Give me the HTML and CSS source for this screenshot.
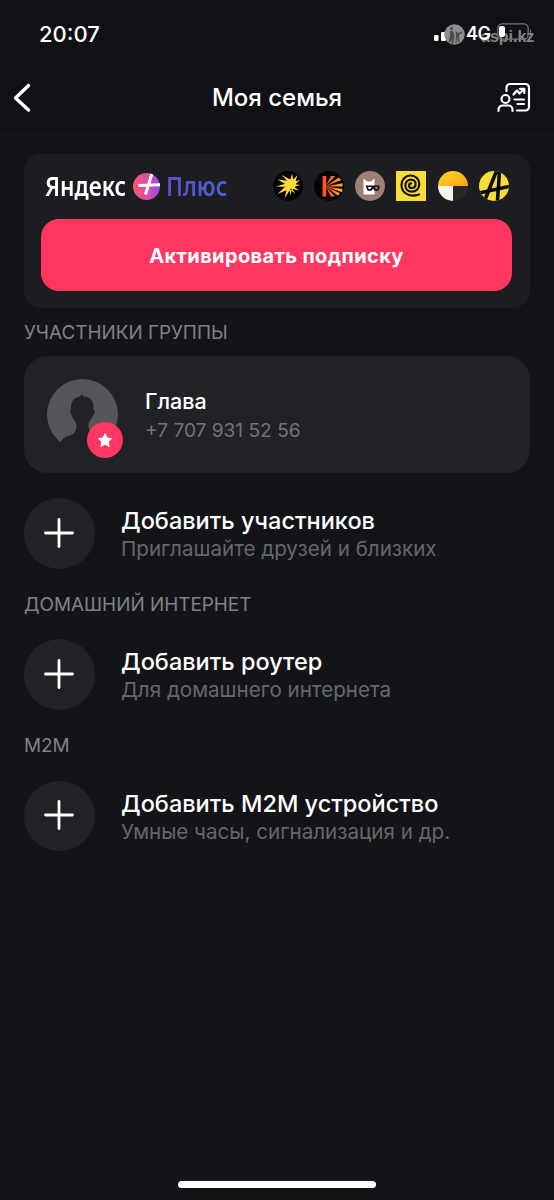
FILE: index.html
```html
<!DOCTYPE html>
<html lang="ru">
<head>
<meta charset="utf-8">
<title>Моя семья</title>
<link rel="stylesheet" href="styles.css">
</head>
<body>
<div class="screen">
  <header class="header">
    <div class="status">
      <span class="time">20:07</span>
      <div class="indicators">
        <svg class="signal" width="12" height="12" viewBox="0 0 12 12"><rect x="0" y="6" width="4.500" height="6" rx="1.3"/><rect x="7" y="3" width="5" height="9" rx="1.3"/></svg>
        <svg class="mark" width="21" height="21" viewBox="0 0 21 21"><circle cx="10.5" cy="10.5" r="10.3" fill="#8d8d8f"/><g fill="#4a4a4d"><circle cx="7.5" cy="4.500" r="1.5"/><path d="M6 7h3l1.500 5-1.500 8-1.500-.5.2-5-1.5 4-1.500-1 1.300-5z"/><path d="M11.500 7l2.500 2 4-1.500v1.500l-3 2 .5 7-1.500.5-.7-6-.8 7h-1l.5-8z"/></g></svg>
        <span class="network">4G</span>
        <span class="brand">aspi.kz</span>
        <svg class="battery" width="36" height="17" viewBox="0 0 36 17"><rect x=".8" y=".8" width="30.4" height="15.4" rx="4.5" fill="none" stroke="#77777a" stroke-width="1.3"/><rect x="2" y="3" width="6" height="11" rx="2" fill="#fff"/><path d="M33 6q2 2.500 0 5z" fill="#8d8d8f"/></svg>
      </div>
    </div>
    <nav class="nav">
      <svg class="back" width="18" height="30" viewBox="0 0 18 30"><path d="M15.500 2.500L2.500 15l13 12"/></svg>
      <h1 class="title">Моя семья</h1>
      <svg class="report" width="36" height="32" viewBox="0 0 36 32"><path d="M10.500 9V5.500a3.500 3.500 0 0 1 3.500-3.500H29.500a3.500 3.500 0 0 1 3.500 3.500V25a3.500 3.500 0 0 1-3.500 3.500H21M17.500 12.500l3.500-4 2.500 3 4.500-4.500M24 6.800h4.300v4.300M18.500 17.500h9.500M21.500 22h6.500M2.500 29v-1.500a4 4 0 0 1 4-4h6a4 4 0 0 1 4 4v1.500"/><circle cx="9.500" cy="17" r="4"/></svg>
    </nav>
  </header>

  <main class="content">
    <section class="promo">
      <div class="promo-top">
        <div class="logo">
          <span class="word yandex"><span class="narrow">Яндекс</span></span>
          <svg class="plus-logo" width="27" height="27" viewBox="0 0 27 27"><defs><linearGradient id="plusFill" x1="0" x2="1"><stop offset="0" stop-color="#fb576a"/><stop offset=".55" stop-color="#d64fac"/><stop offset="1" stop-color="#8549f5"/></linearGradient></defs><circle cx="13.500" cy="13.500" r="13.500" fill="url(#plusFill)"/><path d="M5.500 12.500L27 11.800M18.800 1L12.500 21.500" stroke="#fff" stroke-width="3" fill="none"/></svg>
          <span class="word"><span class="narrow plus">Плюс</span></span>
        </div>
        <div class="services">
          <svg width="30" height="30" viewBox="0 0 30 30"><circle cx="15" cy="15" r="15" fill="#050505"/><g fill="#ffdc3a"><circle cx="18.500" cy="13" r="4.700"/><path d="M17 10l2-7.500 1.500 7.500zM19 10l5.500-6-2.500 8zM20 11l7-2-5.500 5zM20 13l7.500 1-7.500 2zM20 15l6 4.500-8-2zM18 16l4.500 7-6-5zM16 16l1.500 9 1.500-9zM14.500 15l-3 12.500L18 17zM14 14L4.500 23l12-5zM15 12L3 15.500 15 16zM16 10L4.500 8.500 14 14zM18 9l-9-5 6 7z"/></g></svg>
          <svg width="30" height="30" viewBox="0 0 30 30"><defs><linearGradient id="kinoFill" gradientUnits="userSpaceOnUse" x1="8" y1="0" x2="30" y2="0"><stop offset="0" stop-color="#ff501c"/><stop offset=".5" stop-color="#ff701b"/><stop offset="1" stop-color="#ffc22c"/></linearGradient></defs><circle cx="15" cy="15" r="15" fill="#050505"/><path fill="url(#kinoFill)" d="M8.500 5h3.800v20.500H8.500zM12 14.500L17 5h4.200zM12 15l13-8.500 2 2.800zM12 15.200l16.500-3v3.200zM12 15.400l16.500 2.600-.5 3.200zM12 15.700l14 6.500-2.200 2.600zM12 16l9 9.500h-4.200z"/></svg>
          <svg width="30" height="30" viewBox="0 0 30 30"><circle cx="15" cy="15" r="15" fill="#9f7f72"/><path fill="#fff" d="M8.500 7.500l3.500 3h4l3.500-3V23.500h-11z"/><path fill="#111" d="M10.500 14.500h14V17q-.5 3-3 3-2.500 0-3.300-2.500Q17.200 20 14.500 20q-2.700 0-3-3.500z"/><path fill="#fff" d="M13 16h3.500q-.3 2.300-1.900 2.300-1.400 0-1.600-2.300z"/><path fill="#9f7f72" d="M19.800 16h3.300q-.3 2.300-1.600 2.300T19.800 16z"/></svg>
          <svg width="30" height="30" viewBox="0 0 30 30"><path fill="#f9dd37" d="M0 0h30v30H0z"/><path fill="none" stroke="#111" stroke-width="2.200" stroke-linecap="round" d="M23 23.500C13 27 5.500 21.500 5.500 14c0-5.500 4-9.500 9.200-9.500 5 0 8.600 3.700 8.600 8.500 0 4.500-3.100 7.700-7.300 7.700-4 0-6.600-2.600-6.600-6.200 0-3.400 2.400-5.900 5.600-5.900 2.700 0 4.600 1.900 4.600 4.400s-1.600 4-3.700 4c-1.800 0-2.800-1.200-2.800-2.600 0-1.300.8-2 2.100-2"/></svg>
          <svg width="30" height="30" viewBox="0 0 30 30"><defs><linearGradient id="bankFill" x2="1" y2="1"><stop stop-color="#ffd52d"/><stop offset="1" stop-color="#ffa414"/></linearGradient></defs><path fill="url(#bankFill)" d="M0 15a15 15 0 0 1 30 0z"/><path fill="#f4f4ee" d="M0 15h15v15A15 15 0 0 1 0 15z"/><path fill="#292827" d="M15 15h15a15 15 0 0 1-15 15z"/></svg>
          <svg width="30" height="30" viewBox="0 0 30 30"><defs><clipPath id="disc"><circle cx="15" cy="15" r="15"/></clipPath></defs><g clip-path="url(#disc)"><path fill="#f9dd37" d="M0 0h30v30H0z"/><path d="M0 22L30 15.500M17.500 0L5.500 30M20.500 0L18.500 30" stroke="#0b0b0b" stroke-width="3.600" fill="none"/></g></svg>
        </div>
      </div>
      <button class="activate">Активировать подписку</button>
    </section>

    <h2 class="label label-group">УЧАСТНИКИ ГРУППЫ</h2>
    <section class="member">
      <div class="avatar">
        <svg width="72" height="72" viewBox="0 0 72 72"><circle cx="35.500" cy="36.500" r="35.500" fill="#55565a"/><path fill="#212226" d="M13.500 64.500C17 58 21 58.500 25 56.500 28.500 55 29.500 51 29.300 46.500 29 42 25 41 24.200 36.500 23 35.500 23 33 24 31.500 23.500 24 26.500 19.500 32 19 33 17.500 34 17 35.500 16.500L36.500 18.500C43 18.500 47.500 23 46.500 31.500 48.200 33 47.500 36 46 37.500 45 41.500 41.500 42.500 41.500 46.500 41.500 53 45 56 50 57.500L64 60V73H6Z"/></svg>
        <svg class="badge" width="36" height="36" viewBox="0 0 36 36"><circle cx="18" cy="18" r="18" fill="#fc3763"/><path fill="#fff" stroke="#fff" stroke-linejoin="round" d="M18 11.500l2 4.500 4.600.6-3.400 3.200.9 4.700-4.100-2.400-4.100 2.400.9-4.700-3.400-3.200 4.600-.6z"/></svg>
      </div>
      <div class="member-text"><div class="name">Глава</div><div class="phone">+7 707 931 52 56</div></div>
    </section>

    <div class="row row-first">
      <div class="add"><svg width="30" height="30" viewBox="0 0 30 30"><path d="M15 1.500v27M1.500 15h27"/></svg></div>
      <div class="row-text"><div class="row-title">Добавить участников</div><div class="row-note">Приглашайте друзей и близких</div></div>
    </div>
    <h2 class="label">ДОМАШНИЙ ИНТЕРНЕТ</h2>
    <div class="row">
      <div class="add"><svg width="30" height="30" viewBox="0 0 30 30"><path d="M15 1.500v27M1.500 15h27"/></svg></div>
      <div class="row-text"><div class="row-title">Добавить роутер</div><div class="row-note">Для домашнего интернета</div></div>
    </div>
    <h2 class="label">M2M</h2>
    <div class="row">
      <div class="add"><svg width="30" height="30" viewBox="0 0 30 30"><path d="M15 1.500v27M1.500 15h27"/></svg></div>
      <div class="row-text"><div class="row-title">Добавить M2M устройство</div><div class="row-note">Умные часы, сигнализация и др.</div></div>
    </div>
  </main>
  <div class="home"></div>
</div>
</body>
</html>
```
FILE: styles.css
```css
* { box-sizing: border-box; }
body { margin: 0; background: #131418; color: #fff; font-family: Inter, "Noto Sans", sans-serif; }
.screen { height: 1200px; display: flex; flex-direction: column; overflow: hidden; white-space: nowrap; }
.header { height: 130px; background: #101015; }
.status { height: 68px; padding: 0 19px 0 39px; display: flex; justify-content: space-between; align-items: center; }
.time { font-size: 22px; font-weight: 500; }
.indicators { position: relative; width: 101px; height: 24px; margin-top: 2px; }
.indicators > * { position: absolute; }
.signal { left: 0; top: 6px; fill: #fff; }
.mark { left: 10px; top: 1px; }
.network { left: 32px; top: 0; z-index: 2; font-size: 18px; line-height: 22px; font-weight: 600; letter-spacing: -.5px; }
.brand { left: 47px; top: 3px; color: #858588; font: bold 16px/22px "Liberation Sans", Arial, sans-serif; }
.battery { left: 63px; top: 0; }
.nav { height: 60px; padding: 0 22px 0 13px; display: grid; grid-template-columns: 36px 1fr 36px; align-items: center; }
.back { fill: none; stroke: #fff; stroke-width: 3.4; stroke-linecap: round; stroke-linejoin: round; }
.title { margin: 0; padding-left: 9px; text-align: center; font-size: 24px; line-height: 30px; font-weight: 500; }
.report { fill: none; stroke: #fff; stroke-width: 2.2; stroke-linecap: round; stroke-linejoin: round; }
.content { flex: 1; padding: 24px 24px 0; }
.promo { height: 154px; padding: 15px 18px 17px 17px; border-radius: 17px; background: #1c1d20; }
.promo-top { height: 50px; display: flex; justify-content: space-between; padding: 2px 3px 0 4px; }
.logo { display: flex; height: 30px; align-items: center; font-family: "Noto Sans", sans-serif; font-size: 27px; line-height: 30px; font-weight: 600; }
.word { width: 63px; }
.yandex { width: 88px; }
.narrow { display: inline-block; transform: scaleX(.84); transform-origin: left; }
.plus-logo { margin-right: 6px; flex: none; }
.plus { color: transparent; background: linear-gradient(90deg, #6748c2, #4563df); background-clip: text; }
.services { display: flex; gap: 11.3px; }
.activate { display: block; width: 471px; height: 72px; padding: 1px 0 0; border: 0; border-radius: 18px; background: #ff365f; color: #fff; font: 700 20px Inter, sans-serif; letter-spacing: .38px; }
.label { margin: 24.1px 0 22.5px; color: #828286; font-size: 18.9px; font-weight: 400; line-height: 24px; }
.label-group { margin: 12px 0; padding-top: 1px; height: 24px; }
.member { height: 117px; padding: 22px 23px; border-radius: 24px; display: flex; gap: 26px; background: #212226; }
.avatar { position: relative; width: 72px; height: 72px; }
.badge { position: absolute; left: 40px; top: 44px; }
.member-text { padding-top: 9px; }
.name { font-size: 21.5px; line-height: 29px; font-weight: 500; }
.phone { color: #747478; font-size: 19.1px; line-height: 28px; }
.row { height: 70.7px; display: flex; gap: 26px; }
.row-first { margin-top: 25px; }
.add { width: 71px; height: 70.7px; padding: 0 1px 1px 0; border-radius: 50%; background: #212226; display: grid; place-items: center; }
.add svg { fill: none; stroke: #fff; stroke-width: 2.8; stroke-linecap: round; }
.row-text { padding-top: 8px; }
.row-title { font-size: 23.5px; line-height: 29px; font-weight: 500; }
.row-note { font-size: 20.6px; line-height: 27px; color: #67676b; }
.home { width: 198px; height: 7px; margin: 0 auto 12px; border-radius: 4px; background: #fff; }
```
